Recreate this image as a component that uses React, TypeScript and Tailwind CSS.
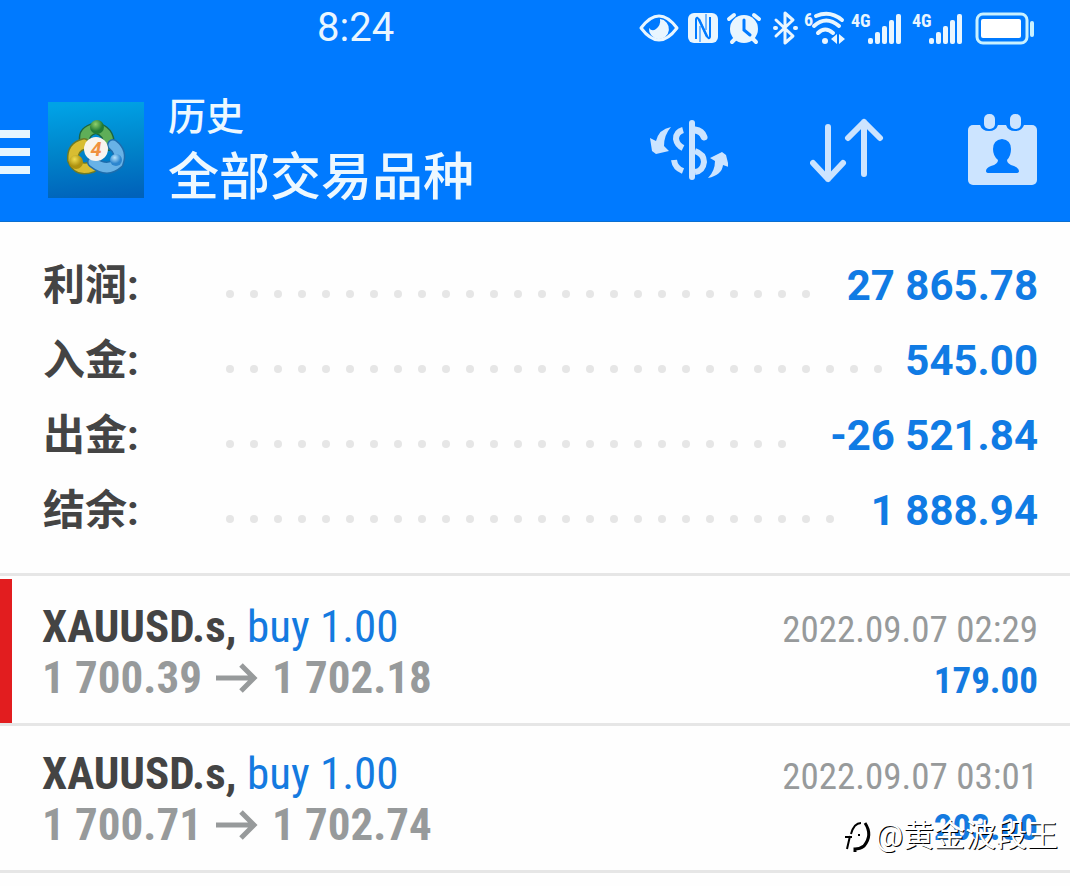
import React, {FC} from 'react';

interface SummaryRowProps {
    label: string,
    value: string
}

interface DealProps {
    symbol: string,
    action: string,
    open: string,
    close: string,
    time: string,
    profit: string,
    marked?: boolean
}

const summary: SummaryRowProps[] = [
    {label: '利润:', value: '27 865.78'},
    {label: '入金:', value: '545.00'},
    {label: '出金:', value: '-26 521.84'},
    {label: '结余:', value: '1 888.94'},
];

const deals: DealProps[] = [
    {symbol: 'XAUUSD.s', action: 'buy 1.00', open: '1 700.39', close: '1 702.18', time: '2022.09.07 02:29', profit: '179.00', marked: true},
    {symbol: 'XAUUSD.s', action: 'buy 1.00', open: '1 700.71', close: '1 702.74', time: '2022.09.07 03:01', profit: '203.00'},
];

const SignalIcon: FC = () => (
    <svg width="54" height="34" viewBox="0 0 54 34" fill="#e9f6ff" className="overflow-visible">
        <text x="2" y="16" fontSize="18" fontWeight="700" fontFamily="'Roboto Condensed', Roboto, sans-serif">4G</text>
        <rect x="19" y="27" width="5" height="6" rx="2"/>
        <rect x="26" y="21" width="5" height="12" rx="2"/>
        <rect x="33" y="15" width="5" height="18" rx="2"/>
        <rect x="40" y="9" width="5" height="24" rx="2"/>
        <rect x="47" y="3" width="5" height="30" rx="2"/>
    </svg>
);

const StatusIcons: FC = () => (
    <div className="flex items-center gap-[7px]">
        <svg width="42" height="34" viewBox="0 0 42 34">
            <path d="M3 17 Q21 -7 39 17 Q21 41 3 17Z" fill="none" stroke="#e9f6ff" strokeWidth="3" strokeLinejoin="round"/>
            <path d="M22 8 A10 10 0 1 1 11 17 Q14 21 18 18 Q23 14 22 8Z" fill="#e9f6ff"/>
        </svg>
        <svg width="32" height="34" viewBox="0 0 32 34">
            <rect x="1" y="2" width="30" height="30" rx="6" fill="#e9f6ff"/>
            <path d="M9 28 V8 Q10 5 12 9 L20 26" fill="none" stroke="#007aff" strokeWidth="2"/>
            <path d="M23 6 V26 Q22 29 20 25 L12 8" fill="none" stroke="#007aff" strokeWidth="2"/>
            <path d="M13 31 V15 M19 3 V19" fill="none" stroke="#007aff" strokeWidth="1"/>
        </svg>
        <svg width="36" height="34" viewBox="0 0 36 34">
            <circle cx="18" cy="18" r="14" fill="#e9f6ff"/>
            <path d="M3 8 L8 4 M28 4 L33 8 M9 28 L6 31 M27 28 L30 31" stroke="#e9f6ff" strokeWidth="4" strokeLinecap="round"/>
            <path d="M18 9 V19 L24 24" fill="none" stroke="#007aff" strokeWidth="3" strokeLinecap="round"/>
        </svg>
        <svg width="26" height="34" viewBox="0 0 26 34" fill="none" stroke="#e9f6ff" strokeWidth="3" strokeLinejoin="round" strokeLinecap="round" className="overflow-visible">
            <path d="M7 9 L24 25 L16 32 V2 L24 9 L7 25"/>
            <path d="M6 17 h1 M26 17 h1" strokeWidth="4"/>
        </svg>
        <svg width="40" height="34" viewBox="0 0 40 34" fill="none" stroke="#e9f6ff" strokeWidth="4" className="overflow-visible">
            <text x="2" y="15" fontSize="18" fontWeight="700" fill="#e9f6ff" stroke="none" fontFamily="'Roboto Condensed', Roboto, sans-serif">6</text>
            <path d="M14 5 Q28 -1 40 9 M12 15 Q24 4 37 15 M16 22 Q23 15 31 22" strokeLinecap="round"/>
            <circle cx="23" cy="30" r="3" fill="#e9f6ff" stroke="none"/>
            <path d="M35 23 V33 L29 28Z M37 23 V33 L43 28Z" fill="#e9f6ff" stroke="none"/>
        </svg>
        <SignalIcon/>
        <SignalIcon/>
        <svg width="64" height="34" viewBox="0 0 64 34">
            <rect x="6" y="3" width="50" height="29" rx="6" fill="none" stroke="#c9f1ff" strokeWidth="3"/>
            <rect x="10" y="8" width="40" height="19" rx="2" fill="#fff"/>
            <rect x="59" y="10" width="4" height="16" rx="2" fill="#c9f1ff"/>
        </svg>
    </div>
);

const AppLogo: FC = () => (
    <svg width="96" height="96" viewBox="0 0 96 96" className="shrink-0">
        <defs>
            <linearGradient id="sky" x1="0.5" y1="0" x2="0.6" y2="1">
                <stop offset="0" stopColor="#00a2e6"/>
                <stop offset="0.5" stopColor="#0084ca"/>
                <stop offset="1" stopColor="#0062ba"/>
            </linearGradient>
            <radialGradient id="green" cx="0.4" cy="0.3"><stop offset="0" stopColor="#8fd06c"/><stop offset="1" stopColor="#227b35"/></radialGradient>
            <radialGradient id="gold" cx="0.4" cy="0.3"><stop offset="0" stopColor="#f2dd50"/><stop offset="1" stopColor="#ae9210"/></radialGradient>
            <radialGradient id="blue" cx="0.4" cy="0.3"><stop offset="0" stopColor="#b9e3fb"/><stop offset="1" stopColor="#2c86cf"/></radialGradient>
        </defs>
        <rect width="96" height="96" fill="url(#sky)"/>
        <g fill="none" strokeLinecap="round">
            <path d="M37 39 Q35 29 48 26 Q61 29 61 43" stroke="#1c6640" strokeWidth="12"/>
            <path d="M37 39 Q35 29 48 26 Q61 29 61 43" stroke="#5fae58" strokeWidth="9"/>
            <path d="M36 42 Q24 45 25 58 Q30 70 44 65" stroke="#6c7a27" strokeWidth="12"/>
            <path d="M36 42 Q24 45 25 58 Q30 70 44 65" stroke="#d8bd32" strokeWidth="9"/>
            <path d="M65 43 Q74 50 70 61 Q59 71 45 60" stroke="#1d6dad" strokeWidth="12"/>
            <path d="M65 43 Q74 50 70 61 Q59 71 45 60" stroke="#68b2e6" strokeWidth="9"/>
        </g>
        <circle cx="49" cy="25" r="7" fill="url(#green)"/>
        <circle cx="28" cy="60" r="7" fill="url(#gold)"/>
        <circle cx="68" cy="58" r="6" fill="url(#blue)"/>
        <circle cx="48" cy="47" r="12" fill="#f8f4ef"/>
        <text x="48" y="54" fontSize="20" fontWeight="700" fontStyle="italic" textAnchor="middle" fill="#f0913f" fontFamily="Roboto, sans-serif">4</text>
    </svg>
);

const Header: FC = () => (
    <header className="bg-[#007aff] border-b border-[#0b6fd0] text-white">
        <div className="flex items-center justify-between h-14 pl-[317px] pr-[35px]">
            <time className="text-[40px] leading-none text-[#eaf6ff]">8:24</time>
            <StatusIcons/>
        </div>
        <div className="flex items-center pt-[33px] pb-[10px] pr-8">
            <button type="button" aria-label="Menu" className="flex flex-col gap-[10px] w-[30px] mt-1 mr-[18px]">
                <span className="h-2 w-full bg-[#e6f6ff]"/>
                <span className="h-2 w-full bg-[#e6f6ff]"/>
                <span className="h-2 w-full bg-[#e6f6ff]"/>
            </button>
            <AppLogo/>
            <div className="flex-1 ml-6 font-medium text-[#edf8ff]">
                <p className="text-[38px] leading-[56px]">历史</p>
                <h1 className="text-[51px] leading-[66px] whitespace-nowrap">全部交易品种</h1>
            </div>
            <div className="flex items-center gap-[82px]">
                <button type="button" aria-label="Currency">
                    <svg width="80" height="70" viewBox="0 0 80 70" fill="none" stroke="#cce4ff" strokeWidth="6">
                        <path d="M44 8 V62" strokeLinecap="round"/>
                        <path d="M47 15 Q54 16 56 22" strokeWidth="7" strokeLinecap="round"/>
                        <path d="M35 15 Q28 17 28 24 Q29 30 35 33"/>
                        <path d="M47 36 Q56 39 56 47 Q55 56 47 57"/>
                        <path d="M26 45 Q27 53 35 56"/>
                        <path d="M23 12 Q11 14 8 26 L2 23 L4 36 L8 39 L21 36 L16 31 Q16 20 23 12Z" fill="#cce4ff" stroke="none"/>
                        <path d="M60 63 Q74 60 75 50 L81 52 L78 40 L74 37 L62 43 L67 46 Q67 56 60 63Z" fill="#cce4ff" stroke="none"/>
                    </svg>
                </button>
                <button type="button" aria-label="Sort">
                    <svg width="74" height="70" viewBox="0 0 74 70" fill="none" stroke="#cce4ff" strokeWidth="6" strokeLinecap="round" strokeLinejoin="round">
                        <path d="M18 12 V64 M3 48 L18 64 L33 48"/>
                        <path d="M54 59 V7 M38 23 L54 7 L70 23"/>
                    </svg>
                </button>
                <button type="button" aria-label="Period">
                    <svg width="72" height="74" viewBox="0 0 72 74">
                        <rect x="2" y="12" width="69" height="60" rx="5" fill="#cce4ff"/>
                        <path d="M14 10 V12 Q16 18 23 18 Q30 18 32 12 V10Z M40 10 V12 Q42 18 49 18 Q56 18 58 12 V10Z" fill="#007aff"/>
                        <rect x="18" y="1" width="11" height="15" rx="5" fill="#cce4ff"/>
                        <rect x="44" y="1" width="11" height="15" rx="5" fill="#cce4ff"/>
                        <path d="M36 26 Q45 27 45 36 Q45 43 41 47 Q41 51 48 53 Q53 55 53 58 Q53 60 50 60 H23 Q20 60 20 58 Q20 55 25 53 Q32 51 32 47 Q27 43 27 36 Q27 27 36 26Z" fill="#007aff"/>
                    </svg>
                </button>
            </div>
        </div>
    </header>
);

const SummaryRow: FC<SummaryRowProps> = ({label, value}) => (
    <div className="flex items-center h-[75px]">
        <dt className="w-[183px] shrink-0 text-[42px] font-bold text-[#444]">{label}</dt>
        {/* dots that do not fit whole wrap to a hidden second line */}
        <div aria-hidden="true" className="flex flex-wrap flex-1 h-2 mt-4 mr-1.5 overflow-hidden">
            {Array.from({length: 80}, (_, i) => (
                <span key={i} className="w-6 h-2 shrink-0"><span className="block size-2 rounded-full bg-[#e6e6e6]"/></span>
            ))}
        </div>
        <dd className="text-[42px] font-bold text-[#107be4]">{value}</dd>
    </div>
);

const Deal: FC<DealProps> = ({symbol, action, open, close, time, profit, marked}) => (
    <li className="flex h-[147px] border-b-3 border-[#e6e6e6]">
        <div className={marked ? 'w-3 bg-[#e21d1f]' : 'w-3'}/>
        <div className="flex flex-1 items-baseline justify-between pt-[22px] pl-[30px] pr-8 font-['Roboto_Condensed','Roboto',sans-serif] whitespace-nowrap">
            <div className="text-[45px] leading-[51px]">
                <p className="text-[#147ae0]"><strong className="text-[#444]">{symbol},</strong> {action}</p>
                <p className="flex items-center font-bold text-[#979a9b]">
                    {open}
                    <svg width="42" height="30" viewBox="0 0 42 30" fill="none" stroke="#979a9b" strokeWidth="5" className="mx-[14px]">
                        <path d="M0 15 H38 M25 2 L38 15 L25 28"/>
                    </svg>
                    {close}
                </p>
            </div>
            <div className="text-[37px] leading-[51px] text-right">
                <p className="text-[#979a9b]">{time}</p>
                <p className="font-bold text-[#147ae0]">{profit}</p>
            </div>
        </div>
    </li>
);

const Watermark: FC = () => (
    <div className="absolute right-3 bottom-5 flex items-center text-[31px] leading-8 text-white [text-shadow:1px_1px_0_#000]">
        <svg width="32" height="34" viewBox="0 0 32 34" fill="none" stroke="#000" strokeWidth="2">
            <path d="M4 30 L7 17 M2 18 H9 M8 15 Q11 4 18 4"/>
            <path d="M22 4 Q30 16 21 27 Q17 30 12 30 L12 33" strokeWidth="3"/>
            <path d="M15 16 h2"/>
        </svg>
        @黄金波段王
    </div>
);

const App: FC = () => {
    return (
        <div className="min-h-screen bg-[#fefefe] font-['Roboto','Noto_Sans_CJK_SC',sans-serif]">
            <Header/>
            <main>
                <dl className="pt-[26px] pb-[25px] pl-[43px] pr-8 border-b-3 border-[#e6e6e6]">
                    {summary.map((row) => <SummaryRow key={row.label} {...row}/>)}
                </dl>
                <div className="relative">
                    <ul className="pt-[3px]">
                        {deals.map((deal) => <Deal key={deal.time} {...deal}/>)}
                    </ul>
                    <Watermark/>
                </div>
            </main>
        </div>
    );
};

export default App;
